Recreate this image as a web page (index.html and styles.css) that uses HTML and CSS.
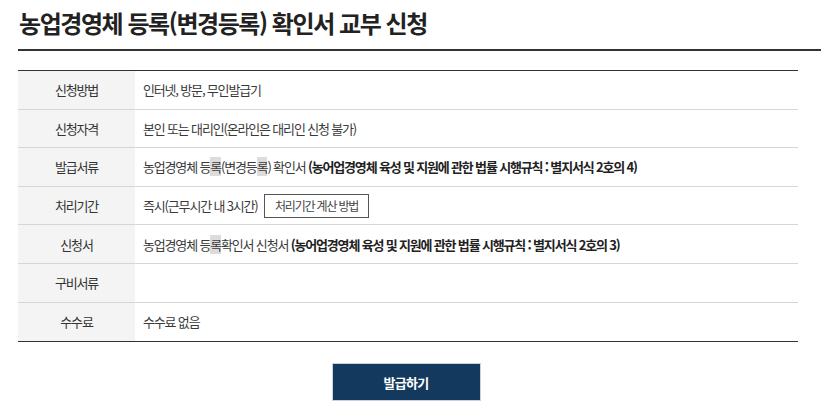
FILE: index.html
```html
<!DOCTYPE html>
<html lang="ko">
<head>
<meta charset="utf-8">
<title>농업경영체 등록(변경등록) 확인서 교부 신청</title>
<link rel="stylesheet" href="styles.css">
</head>
<body>
<div class="wrap">
  <h1 class="page-title">농업경영체 등록(변경등록) 확인서 교부 신청</h1>

  <div class="info">
    <div class="row">
      <div class="label">신청방법</div>
      <div class="value">인터넷, 방문, 무인발급기</div>
    </div>
    <div class="row">
      <div class="label">신청자격</div>
      <div class="value">본인 또는 대리인(온라인은 대리인 신청 불가)</div>
    </div>
    <div class="row">
      <div class="label">발급서류</div>
      <div class="value">농업경영체 등<span class="mark">록</span>(변경등<span class="mark">록</span>) 확인서 <b>(농어업경영체 육성 및 지원에 관한 법률 시행규칙 : 별지서식 2호의 4)</b></div>
    </div>
    <div class="row">
      <div class="label">처리기간</div>
      <div class="value">즉시(근무시간 내 3시간) <button class="btn-line" type="button">처리기간 계산 방법</button></div>
    </div>
    <div class="row">
      <div class="label">신청서</div>
      <div class="value">농업경영체 등<span class="mark">록</span>확인서 신청서 <b>(농어업경영체 육성 및 지원에 관한 법률 시행규칙 : 별지서식 2호의 3)</b></div>
    </div>
    <div class="row">
      <div class="label">구비서류</div>
      <div class="value"></div>
    </div>
    <div class="row">
      <div class="label">수수료</div>
      <div class="value">수수료 없음</div>
    </div>
  </div>

  <div class="actions">
    <button class="btn-primary" type="button">발급하기</button>
  </div>
</div>
</body>
</html>
```

FILE: styles.css
```css
* {
  box-sizing: border-box;
}

html, body {
  margin: 0;
  padding: 0;
  background: #fff;
  overflow: hidden;
}

body {
  font-family: "Noto Sans CJK KR", "Noto Sans", sans-serif;
  color: #333;
}

.wrap {
  padding: 0 0 0 18px;
}

.page-title {
  margin: 0;
  padding: 6px 0 0 1px;
  height: 51px;
  font-size: 24px;
  line-height: 34px;
  font-weight: 700;
  letter-spacing: -0.06em;
  color: #222;
  border-bottom: 2px solid #333;
}

.info {
  width: 780px;
  margin-top: 19px;
  border-top: 1px solid #333;
  border-bottom: 1px solid #333;
  font-size: 13px;
  letter-spacing: -0.09em;
}

.row {
  display: flex;
  height: 38.6px;
  border-bottom: 1px solid #d6d6d6;
}

.row:last-child {
  border-bottom: 0;
}

.label {
  flex: 0 0 117px;
  display: flex;
  align-items: center;
  justify-content: center;
  background: #f4f4f4;
  color: #333;
}

.value {
  flex: 1;
  display: flex;
  align-items: center;
  padding-left: 8px;
  color: #3a3a3a;
  white-space: pre;
}

.value b {
  font-weight: 700;
  color: #222;
}

.mark {
  background: #dcdcdc;
}

.btn-line {
  margin-left: 4px;
  height: 24px;
  padding: 0 10px;
  border: 1px solid #555;
  background: #fff;
  font-family: inherit;
  font-size: 12px;
  letter-spacing: -0.1em;
  color: #444;
  cursor: pointer;
}

.actions {
  width: 780px;
  display: flex;
  justify-content: center;
  padding-top: 21px;
}

.btn-primary {
  width: 149px;
  height: 38px;
  margin-right: 4px;
  border: 1px solid #c9d3de;
  background: #133a5e;
  color: #fff;
  font-family: inherit;
  font-size: 13px;
  font-weight: 700;
  letter-spacing: -0.05em;
  cursor: pointer;
}
```
